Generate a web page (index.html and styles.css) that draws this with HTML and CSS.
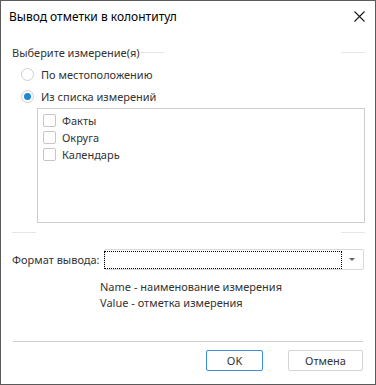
FILE: index.html
```html
<!DOCTYPE html>
<html lang="ru">
<head>
    <meta charset="UTF-8">
    <meta name="viewport" content="width=device-width, initial-scale=1.0">
    <title>Вывод отметки в колонтитул</title>
    <link rel="stylesheet" href="styles.css">
</head>
<body>
    <div class="dialog">
        <div class="titlebar">
            <span class="title">Вывод отметки в колонтитул</span>
            <svg class="close" width="11" height="11" viewBox="0 0 11 11">
                <path d="M0.5 0.5 L10.5 10.5 M10.5 0.5 L0.5 10.5" stroke="#1a1a1a" stroke-width="1.1" fill="none"/>
            </svg>
        </div>

        <div class="content">
            <div class="group-head">
                <span>Выберите измерение(я)</span>
                <span class="rule short"></span>
                <span class="fill"></span>
                <span class="rule short"></span>
            </div>

            <div class="radio-row">
                <span class="radio"></span>
                <span>По местоположению</span>
            </div>
            <div class="radio-row">
                <span class="radio checked"></span>
                <span>Из списка измерений</span>
            </div>

            <div class="listbox">
                <div class="check-row"><span class="checkbox"></span><span>Факты</span></div>
                <div class="check-row"><span class="checkbox"></span><span>Округа</span></div>
                <div class="check-row"><span class="checkbox"></span><span>Календарь</span></div>
            </div>

            <div class="group-sep">
                <span class="rule short"></span>
                <span class="fill"></span>
                <span class="rule short"></span>
            </div>

            <div class="format-row">
                <span class="format-label">Формат вывода:</span>
                <div class="combo">
                    <div class="combo-input"></div>
                    <div class="combo-arrow"></div>
                </div>
            </div>

            <div class="hint">
                <div>Name - наименование измерения</div>
                <div>Value - отметка измерения</div>
            </div>
        </div>

        <div class="footer">
            <div class="footer-line"></div>
            <div class="buttons">
                <button class="btn primary">OK</button>
                <button class="btn">Отмена</button>
            </div>
        </div>
    </div>
</body>
</html>
```

FILE: styles.css
```css
* {
    box-sizing: border-box;
}
body {
    margin: 0;
    font-family: "Noto Sans", "Open Sans", sans-serif;
    font-size: 11px;
    color: #333;
    background: #fff;
}
.dialog {
    width: 376px;
    height: 385px;
    border: 1px solid #5a5a5a;
    display: flex;
    flex-direction: column;
}
.titlebar {
    height: 30px;
    display: flex;
    align-items: center;
    justify-content: space-between;
    padding: 0 10px 0 8px;
}
.title {
    color: #000;
    font-size: 12px;
}
.close {
    display: block;
}
.content {
    padding: 13px 10px 0 11px;
    display: flex;
    flex-direction: column;
}
.group-head {
    height: 16px;
    display: flex;
    align-items: center;
    white-space: nowrap;
}
.rule {
    height: 1px;
    background: #e6e6e6;
}
.rule.short {
    width: 24px;
}
.group-head .rule.short:first-of-type {
    margin-left: 7px;
}
.fill {
    flex: 1;
}
.radio-row {
    height: 22px;
    display: flex;
    align-items: center;
    padding-left: 9px;
}
.group-head + .radio-row {
    margin-top: 3px;
}
.radio {
    width: 13px;
    height: 13px;
    border: 1px solid #cfcfcf;
    border-radius: 50%;
    margin-right: 7px;
    position: relative;
}
.radio.checked::after {
    content: "";
    position: absolute;
    left: 2px;
    top: 2px;
    width: 7px;
    height: 7px;
    border-radius: 50%;
    background: #1e86d6;
}
.listbox {
    margin: 1px 0 0 25px;
    height: 115px;
    border: 1px solid #cdcdcd;
    padding: 3px 5px;
}
.check-row {
    height: 17px;
    display: flex;
    align-items: center;
}
.checkbox {
    width: 13px;
    height: 13px;
    border: 1px solid #c6c6c6;
    border-radius: 2px;
    margin-right: 6px;
}
.group-sep {
    margin-top: 9px;
    height: 1px;
    display: flex;
}
.format-row {
    margin-top: 16px;
    height: 21px;
    display: flex;
    align-items: center;
}
.format-label {
    width: 92px;
    flex-shrink: 0;
    white-space: nowrap;
}
.combo {
    width: 260px;
    flex-shrink: 0;
    height: 21px;
    border: 1px solid #d9d9d9;
    border-radius: 2px;
    display: flex;
    align-items: center;
}
.combo-input {
    width: 238px;
    height: 18px;
    margin-left: -1px;
    border: 1px dotted #000;
}
.combo-arrow {
    margin-left: 7px;
    width: 0;
    height: 0;
    border-left: 3px solid transparent;
    border-right: 3px solid transparent;
    border-top: 3px solid #666;
}
.hint {
    margin: 9px 0 0 88px;
    line-height: 16px;
}
.footer {
    margin-top: auto;
    padding: 0 12px 13px 12px;
}
.footer-line {
    height: 1px;
    background: #cfcfcf;
}
.buttons {
    margin-top: 8px;
    display: flex;
    justify-content: flex-end;
    gap: 25px;
}
.btn {
    height: 21px;
    font-family: inherit;
    font-size: 11px;
    color: #333;
    background: #fff;
    border: 1px solid #d4d4d4;
    border-radius: 2px;
    width: 75px;
    padding: 0;
}
.btn.primary {
    width: 57px;
    border-color: #3a8fd6;
}
```
